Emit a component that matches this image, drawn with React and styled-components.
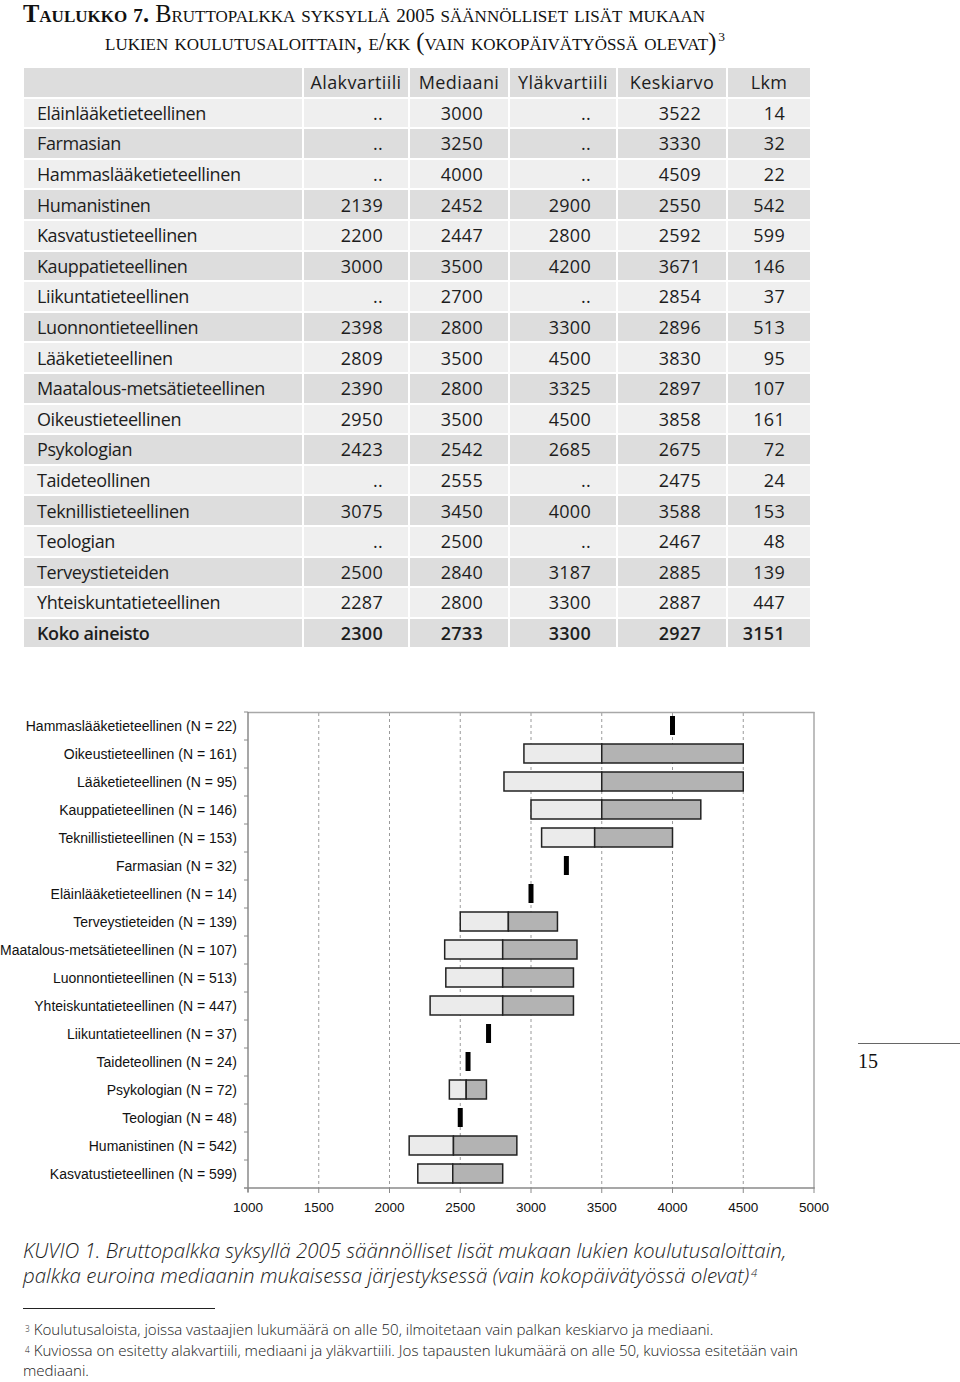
import React from 'react';
import styled, { createGlobalStyle } from 'styled-components';

const GlobalStyle = createGlobalStyle`
  html, body { margin: 0; padding: 0; background: #fff; }
  body { font-family: "Open Sans", "Noto Sans", sans-serif; color: #1a1a1a; }
`;

const Page = styled.div`
  width: 960px;
  min-height: 1382px;
  box-sizing: border-box;
`;

const Title = styled.h1`
  margin: 0;
  padding: 0 0 0 105px;
  text-indent: -82px;
  font-family: "Liberation Serif", "Times New Roman", serif;
  font-variant: small-caps;
  font-weight: 400;
  font-size: 24.5px;
  line-height: 28px;
  color: #111;
  white-space: nowrap;
`;

const TitleLead = styled.span`
  font-weight: 700;
`;

const OldStyle = styled.span`
  font-size: 0.78em;
  line-height: 1;
`;

const Sup = styled.sup`
  font-size: 0.55em;
  line-height: 0;
  vertical-align: ${p => p.$raise || '0.7em'};
  margin-left: 2px;
`;

const Table = styled.div`
  margin: 12px 0 0 24px;
  width: 786px;
  display: flex;
  flex-direction: column;
  gap: 2px;
`;

const Row = styled.div`
  display: grid;
  grid-template-columns: 278px 104px 98px 106px 108px 82px;
  column-gap: 2px;
  height: 28.6px;
`;

const Cell = styled.div`
  background: ${p => (p.$shade ? '#dddddd' : '#efefef')};
  display: flex;
  align-items: center;
  justify-content: ${p => p.$align || 'flex-end'};
  padding: ${p => (p.$align === 'flex-start' ? '0 0 0 13px' : p.$align === 'center' ? '0' : '0 25px 0 0')};
  font-size: 18px;
  letter-spacing: ${p => (p.$align === 'flex-start' ? '-0.4px' : p.$align === 'center' ? '0.4px' : '0.3px')};
  font-weight: ${p => (p.$bold ? 600 : 400)};
  color: #1d1d1d;
  white-space: nowrap;
  overflow: hidden;
`;

const ChartRow = styled.div`
  display: flex;
  margin-top: 65px;
`;

const Labels = styled.div`
  width: 240px;
  box-sizing: border-box;
  padding-right: 3px;
  display: flex;
  flex-direction: column;
`;

const Label = styled.div`
  height: 28px;
  display: flex;
  align-items: center;
  justify-content: flex-end;
  font-family: "Liberation Sans", Arial, sans-serif;
  font-size: 14px;
  color: #111;
  white-space: nowrap;
`;

const Plot = styled.svg`
  display: block;
  flex: none;
  overflow: visible;
`;

const Aside = styled.div`
  margin-left: 8px;
  flex: 1;
  padding-top: 331px;
`;

const AsideRule = styled.div`
  border-top: 1px solid #666;
`;

const PageNo = styled.div`
  margin-top: 5px;
  font-family: "Liberation Serif", "Times New Roman", serif;
  font-size: 20px;
  line-height: 24px;
  color: #111;
`;

const Caption = styled.p`
  margin: 16px 0 0 23px;
  font-style: italic;
  font-weight: 300;
  font-size: 20.5px;
  line-height: 25px;
  color: #1a1a1a;
  white-space: nowrap;
`;

const FootRule = styled.div`
  margin: 20px 0 0 23px;
  width: 192px;
  border-top: 1px solid #222;
`;

const Notes = styled.div`
  margin: 10px 0 0 23px;
  width: 800px;
`;

const Note = styled.p`
  margin: 0;
  font-weight: 300;
  font-size: 15.1px;
  line-height: 20.5px;
  color: #1a1a1a;
`;

const tableRows = [
  ['Eläinlääketieteellinen', '..', '3000', '..', '3522', '14'],
  ['Farmasian', '..', '3250', '..', '3330', '32'],
  ['Hammaslääketieteellinen', '..', '4000', '..', '4509', '22'],
  ['Humanistinen', '2139', '2452', '2900', '2550', '542'],
  ['Kasvatustieteellinen', '2200', '2447', '2800', '2592', '599'],
  ['Kauppatieteellinen', '3000', '3500', '4200', '3671', '146'],
  ['Liikuntatieteellinen', '..', '2700', '..', '2854', '37'],
  ['Luonnontieteellinen', '2398', '2800', '3300', '2896', '513'],
  ['Lääketieteellinen', '2809', '3500', '4500', '3830', '95'],
  ['Maatalous-metsätieteellinen', '2390', '2800', '3325', '2897', '107'],
  ['Oikeustieteellinen', '2950', '3500', '4500', '3858', '161'],
  ['Psykologian', '2423', '2542', '2685', '2675', '72'],
  ['Taideteollinen', '..', '2555', '..', '2475', '24'],
  ['Teknillistieteellinen', '3075', '3450', '4000', '3588', '153'],
  ['Teologian', '..', '2500', '..', '2467', '48'],
  ['Terveystieteiden', '2500', '2840', '3187', '2885', '139'],
  ['Yhteiskuntatieteellinen', '2287', '2800', '3300', '2887', '447'],
];

const headers = ['Alakvartiili', 'Mediaani', 'Yläkvartiili', 'Keskiarvo', 'Lkm'];

const chartRows = [
  ['Hammaslääketieteellinen (N = 22)', null, 4000, null],
  ['Oikeustieteellinen (N = 161)', 2950, 3500, 4500],
  ['Lääketieteellinen (N = 95)', 2809, 3500, 4500],
  ['Kauppatieteellinen (N = 146)', 3000, 3500, 4200],
  ['Teknillistieteellinen (N = 153)', 3075, 3450, 4000],
  ['Farmasian (N = 32)', null, 3250, null],
  ['Eläinlääketieteellinen (N = 14)', null, 3000, null],
  ['Terveystieteiden (N = 139)', 2500, 2840, 3187],
  ['Maatalous-metsätieteellinen (N = 107)', 2390, 2800, 3325],
  ['Luonnontieteellinen (N = 513)', 2398, 2800, 3300],
  ['Yhteiskuntatieteellinen (N = 447)', 2287, 2800, 3300],
  ['Liikuntatieteellinen (N = 37)', null, 2700, null],
  ['Taideteollinen (N = 24)', null, 2555, null],
  ['Psykologian (N = 72)', 2423, 2542, 2685],
  ['Teologian (N = 48)', null, 2500, null],
  ['Humanistinen (N = 542)', 2139, 2452, 2900],
  ['Kasvatustieteellinen (N = 599)', 2200, 2447, 2800],
];

const X0 = 8;
const XR = 574;
const ROW_H = 28;
const PLOT_H = ROW_H * chartRows.length;
const xOf = v => X0 + ((v - 1000) * (XR - X0)) / 4000;
const ticks = [1000, 1500, 2000, 2500, 3000, 3500, 4000, 4500, 5000];

function Chart() {
  return (
    <Plot width="610" height="510" viewBox="0 0 610 510">
      {ticks.slice(1, -1).map(v => (
        <line key={v} x1={xOf(v)} x2={xOf(v)} y1={1} y2={PLOT_H} stroke="#9a9a9a" strokeWidth="1" strokeDasharray="3 3" />
      ))}
      <line x1={X0} x2={XR + 0.5} y1={0.5} y2={0.5} stroke="#a8a8a8" strokeWidth="1.5" />
      <line x1={XR} x2={XR} y1={0} y2={PLOT_H} stroke="#a8a8a8" strokeWidth="1.5" />
      <line x1={X0} x2={X0} y1={0} y2={PLOT_H + 4} stroke="#8a8a8a" strokeWidth="1.5" />
      <line x1={X0 - 4} x2={XR + 0.75} y1={PLOT_H} y2={PLOT_H} stroke="#8a8a8a" strokeWidth="1.5" />
      {chartRows.map((_, i) => (
        <line key={i} x1={X0 - 4} x2={X0} y1={i * ROW_H} y2={i * ROW_H} stroke="#8a8a8a" strokeWidth="1" />
      ))}
      {ticks.map(v => (
        <line key={v} x1={xOf(v)} x2={xOf(v)} y1={PLOT_H} y2={PLOT_H + 5} stroke="#8a8a8a" strokeWidth="1" />
      ))}
      {chartRows.map(([label, q1, med, q3], i) => {
        const y = i * ROW_H + 4;
        if (q1 == null) {
          return <rect key={label} x={xOf(med) - 2.5} y={y} width="5" height="19" fill="#000" />;
        }
        return (
          <g key={label}>
            <rect x={xOf(q1)} y={y} width={xOf(med) - xOf(q1)} height="19" fill="#ebebeb" stroke="#222" strokeWidth="1.5" />
            <rect x={xOf(med)} y={y} width={xOf(q3) - xOf(med)} height="19" fill="#b3b3b3" stroke="#222" strokeWidth="1.5" />
          </g>
        );
      })}
      {ticks.map(v => (
        <text key={v} x={xOf(v)} y={PLOT_H + 24} textAnchor="middle" fontFamily="Liberation Sans, Arial, sans-serif" fontSize="13.5" fill="#111">
          {v}
        </text>
      ))}
    </Plot>
  );
}

export default function App() {
  return (
    <Page>
      <GlobalStyle />
      <Title>
        <TitleLead>Taulukko <OldStyle>7</OldStyle>.</TitleLead> Bruttopalkka syksyllä <OldStyle>2005</OldStyle> säännölliset lisät mukaan
        <br />
        lukien koulutusaloittain, e/kk (vain kokopäivätyössä olevat)<Sup>3</Sup>
      </Title>

      <Table>
        <Row>
          <Cell $shade $align="center" />
          {headers.map(h => (
            <Cell key={h} $shade $align="center">{h}</Cell>
          ))}
        </Row>
        {tableRows.map((r, i) => (
          <Row key={r[0]}>
            <Cell $shade={i % 2 === 1} $align="flex-start">{r[0]}</Cell>
            {r.slice(1).map((v, j) => (
              <Cell key={j} $shade={i % 2 === 1}>{v}</Cell>
            ))}
          </Row>
        ))}
        <Row>
          <Cell $shade $bold $align="flex-start">Koko aineisto</Cell>
          {['2300', '2733', '3300', '2927', '3151'].map((v, j) => (
            <Cell key={j} $shade $bold>{v}</Cell>
          ))}
        </Row>
      </Table>

      <ChartRow>
        <Labels>
          {chartRows.map(([label]) => (
            <Label key={label}>{label}</Label>
          ))}
        </Labels>
        <Chart />
        <Aside>
          <AsideRule />
          <PageNo>15</PageNo>
        </Aside>
      </ChartRow>

      <Caption>
        KUVIO 1. Bruttopalkka syksyllä 2005 säännölliset lisät mukaan lukien koulutusaloittain,
        <br />
        palkka euroina mediaanin mukaisessa järjestyksessä (vain kokopäivätyössä olevat)<Sup $raise="0.6em">4</Sup>
      </Caption>

      <FootRule />

      <Notes>
        <Note>
          <Sup $raise="0.35em">3</Sup> Koulutusaloista, joissa vastaajien lukumäärä on alle 50, ilmoitetaan vain palkan keskiarvo ja mediaani.
        </Note>
        <Note>
          <Sup $raise="0.35em">4</Sup> Kuviossa on esitetty alakvartiili, mediaani ja yläkvartiili. Jos tapausten lukumäärä on alle 50, kuviossa esitetään vain mediaani.
        </Note>
      </Notes>
    </Page>
  );
}
